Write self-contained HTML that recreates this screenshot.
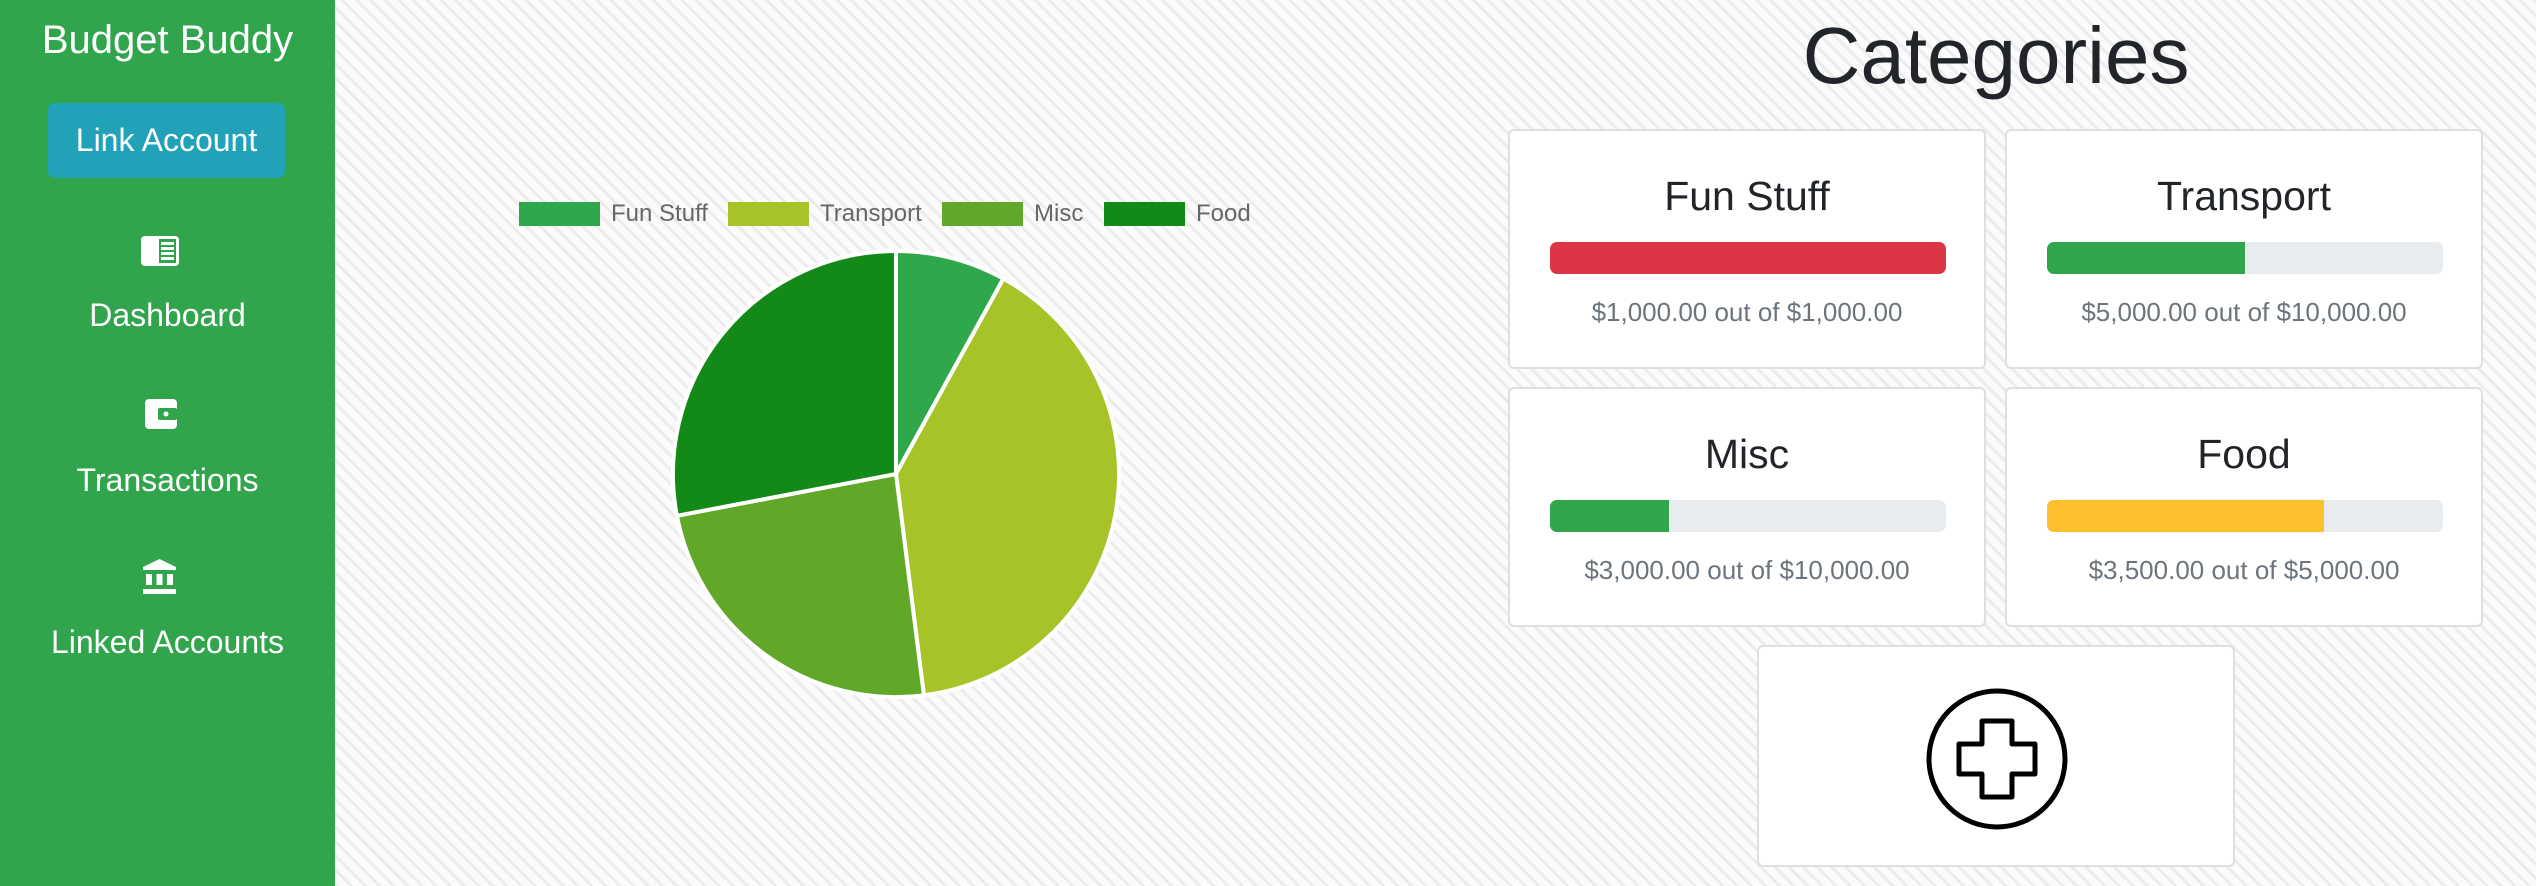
<!DOCTYPE html>
<html><head><meta charset="utf-8"><style>
*{margin:0;padding:0;box-sizing:border-box}
body{width:2536px;height:886px;overflow:hidden;position:relative;font-family:"Liberation Sans",sans-serif;
background-color:#f3f3f3;
background-image:repeating-linear-gradient(45deg,#fbfbfb 0 7px,#ececec 7px 10px);}
.sb{position:absolute;left:0;top:0;width:335px;height:886px;background:#30a54b;color:#fff;text-align:center}
.abs{position:absolute}
.card{position:absolute;width:478px;height:240px;background:#fff;border:2px solid #dfdfdf;border-radius:6px;text-align:center}
.card h2{position:absolute;left:0;right:0;top:42px;font-weight:normal;font-size:41px;color:#212529}
.bar{position:absolute;left:40px;top:111px;width:396px;height:32px;background:#e9ecef;border-radius:7px;overflow:hidden}
.bar div{height:100%}
.amt{position:absolute;left:0;right:0;top:166px;font-size:26px;color:#6c757d}
.lg{position:absolute;top:202px;height:24px;width:81px}
.lt{position:absolute;top:200px;font-size:24px;color:#666;font-family:"Liberation Sans",sans-serif}
</style></head><body>
<div class="sb">
 <div class="abs" style="left:0;width:335px;top:18px;font-size:40px">Budget Buddy</div>
 <div class="abs" style="left:48px;top:103px;width:237px;height:75px;background:#22a2b8;border-radius:7px;font-size:32px;line-height:75px">Link Account</div>
 <svg class="abs" style="left:141px;top:236px" width="38" height="30" viewBox="0 0 38 30"><rect x="0" y="0" width="38" height="30" rx="4" fill="#fff"/><rect x="18" y="3" width="17" height="24" fill="#30a54b"/><g fill="#fff"><rect x="20" y="6" width="13" height="3"/><rect x="20" y="11" width="13" height="3"/><rect x="20" y="16" width="13" height="3"/><rect x="20" y="21" width="13" height="3"/></g></svg>
 <div class="abs" style="left:0;width:335px;top:297px;font-size:32px">Dashboard</div>
 <svg class="abs" style="left:145px;top:399px" width="32" height="30" viewBox="0 0 32 30"><rect x="0" y="0" width="32" height="30" rx="4" fill="#fff"/><rect x="13" y="9" width="19" height="12" rx="2" fill="#30a54b"/><circle cx="21" cy="15" r="2.5" fill="#fff"/></svg>
 <div class="abs" style="left:0;width:335px;top:462px;font-size:32px">Transactions</div>
 <svg class="abs" style="left:143px;top:559px" width="33" height="36" viewBox="0 0 33 36"><path d="M16.5 0 L33 8 V11 H0 V8 Z" fill="#fff"/><rect x="3" y="15" width="6" height="11" fill="#fff"/><rect x="13.5" y="15" width="6" height="11" fill="#fff"/><rect x="24" y="15" width="6" height="11" fill="#fff"/><rect x="0" y="30" width="33" height="5" fill="#fff"/></svg>
 <div class="abs" style="left:0;width:335px;top:624px;font-size:32px">Linked Accounts</div>
</div>

<div class="lg" style="left:519px;background:#2ea84b"></div><div class="lt" style="left:611px">Fun Stuff</div>
<div class="lg" style="left:728px;background:#a6c427"></div><div class="lt" style="left:820px">Transport</div>
<div class="lg" style="left:942px;background:#62a828"></div><div class="lt" style="left:1034px">Misc</div>
<div class="lg" style="left:1104px;background:#138a17"></div><div class="lt" style="left:1196px">Food</div>

<svg class="abs" style="left:0;top:0" width="1500" height="886">
<g stroke="#fff" stroke-width="4" stroke-linejoin="round">
<path d="M896 474 L896 251 A223 223 0 0 1 1003.4 278.6 Z" fill="#2ea84b"/>
<path d="M896 474 L1003.4 278.6 A223 223 0 0 1 923.9 695.3 Z" fill="#a6c427"/>
<path d="M896 474 L923.9 695.3 A223 223 0 0 1 676.9 515.8 Z" fill="#62a828"/>
<path d="M896 474 L676.9 515.8 A223 223 0 0 1 896 251 Z" fill="#138a17"/>
</g></svg>

<div class="abs" style="left:1500px;width:992px;top:10px;text-align:center;font-size:80px;color:#212529">Categories</div>

<div class="card" style="left:1508px;top:129px"><h2>Fun Stuff</h2><div class="bar"><div style="width:100%;background:#dc3545"></div></div><div class="amt">$1,000.00 out of $1,000.00</div></div>
<div class="card" style="left:2005px;top:129px"><h2>Transport</h2><div class="bar"><div style="width:50%;background:#30a54b"></div></div><div class="amt">$5,000.00 out of $10,000.00</div></div>
<div class="card" style="left:1508px;top:387px"><h2>Misc</h2><div class="bar"><div style="width:30%;background:#30a54b"></div></div><div class="amt">$3,000.00 out of $10,000.00</div></div>
<div class="card" style="left:2005px;top:387px"><h2>Food</h2><div class="bar"><div style="width:70%;background:#fdc02f"></div></div><div class="amt">$3,500.00 out of $5,000.00</div></div>
<div class="card" style="left:1757px;top:645px;height:222px">
<svg class="abs" style="left:165px;top:39px" width="146" height="146" viewBox="0 0 146 146"><circle cx="73" cy="73" r="68" fill="#fff" stroke="#000" stroke-width="5"/><path d="M58 35 H88 V58 H111 V88 H88 V111 H58 V88 H35 V58 H58 Z" fill="none" stroke="#000" stroke-width="5" stroke-linejoin="round"/></svg>
</div>
</body></html>
